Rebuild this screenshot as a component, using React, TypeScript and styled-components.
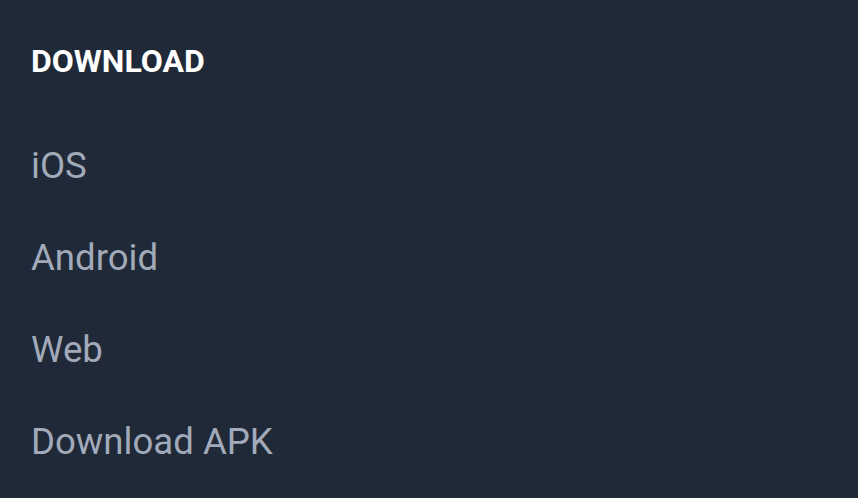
import React from "react";
import styled, { createGlobalStyle } from "styled-components";

const GlobalStyle = createGlobalStyle`
  html, body {
    margin: 0;
    padding: 0;
    background-color: #1f2937;
  }
  * {
    box-sizing: border-box;
  }
`;

const links = ["iOS", "Android", "Web", "Download APK"];

const Footer = styled.footer`
  width: 858px;
  height: 498px;
  background-color: #1f2937;
  padding: 41px 31px 0;
  font-family: Roboto, "Liberation Sans", sans-serif;
`;

const Title = styled.h2`
  margin: 0;
  color: #ffffff;
  font-size: 32px;
  line-height: 40px;
  font-weight: 700;
  text-transform: uppercase;
`;

const LinkList = styled.ul`
  list-style: none;
  margin: 57px 0 0;
  padding: 0;
  display: flex;
  flex-direction: column;
  gap: 36px;
`;

const LinkItem = styled.li`
  line-height: 56px;
  font-size: 36.6px;
`;

const FooterLink = styled.a`
  color: #a2aaba;
  text-decoration: none;
  &:hover {
    color: #ffffff;
  }
`;

export default function App() {
  return (
    <>
      <GlobalStyle />
      <Footer>
        <Title>Download</Title>
        <LinkList>
          {links.map((label) => (
            <LinkItem key={label}>
              <FooterLink href="#">{label}</FooterLink>
            </LinkItem>
          ))}
        </LinkList>
      </Footer>
    </>
  );
}
